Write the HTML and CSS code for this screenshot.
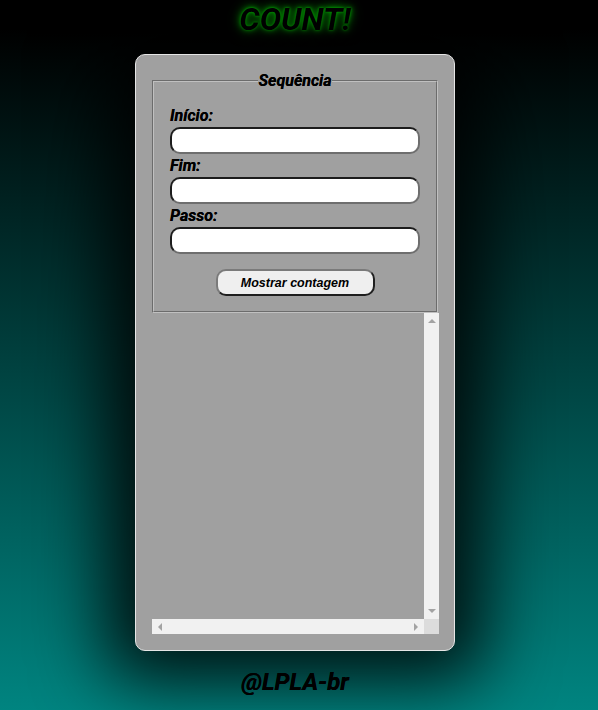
FILE: index.html
```html
<!DOCTYPE html>
<html lang="pt-BR">
<head>
<meta charset="utf-8">
<title>COUNT!</title>
<link rel="stylesheet" href="styles.css">
</head>
<body>
<header class="top">
  <h1 class="title">COUNT!</h1>
</header>
<main class="card">
  <fieldset class="box">
    <legend class="legend">Sequência</legend>
    <label class="lbl" for="inicio">Início:</label>
    <input class="field" type="number" id="inicio">
    <label class="lbl" for="fim">Fim:</label>
    <input class="field" type="number" id="fim">
    <label class="lbl" for="passo">Passo:</label>
    <input class="field" type="number" id="passo">
    <div class="actions">
      <button class="btn" type="button">Mostrar contagem</button>
    </div>
  </fieldset>
  <div class="result">
    <div class="result-body"></div>
    <div class="vbar">
      <span class="arr arr-up"></span>
      <span class="arr arr-down"></span>
    </div>
    <div class="hbar">
      <span class="arr arr-left"></span>
      <span class="arr arr-right"></span>
    </div>
    <div class="corner"></div>
  </div>
</main>
<footer class="foot">@LPLA-br</footer>
</body>
</html>
```
FILE: styles.css
```css
html {
  height: 100%;
}
body {
  margin: 0;
  padding: 0 8px 0 0;
  min-height: 100%;
  box-sizing: border-box;
  background: linear-gradient(to bottom, #000 0%, #000 4%, #008480 100%);
  font-family: Roboto, "Liberation Sans", sans-serif;
  display: flex;
  flex-direction: column;
  align-items: center;
}
.top {
  text-align: center;
}
.title {
  margin: 0;
  font-size: 32px;
  font-weight: 700;
  font-style: italic;
  color: #000;
  line-height: normal;
  text-shadow: 0 0 2px #0e0, 0 0 5px #0c0, 0 0 10px #0a0, 0 0 16px #060;
}
.card {
  margin-top: 16px;
  width: 320px;
  box-sizing: border-box;
  background: #a0a0a0;
  border: 1px solid #e6e6e6;
  border-radius: 10px;
  padding: 16px;
  box-shadow: 0 0 70px 30px rgba(0, 0, 0, 0.85);
}
.box {
  margin: 0;
  padding: 16px 16px 15px;
  border: 2px groove #c0c0c0;
  display: flex;
  flex-direction: column;
  min-width: 0;
}
.legend {
  margin: 0 auto;
  padding: 0 1px;
  font-size: 16px;
  font-weight: 700;
  font-style: italic;
  color: #000;
  text-shadow: 0 0 0.5px #000;
}
.lbl {
  font-size: 16px;
  font-weight: 700;
  font-style: italic;
  color: #000;
  line-height: 19px;
  text-shadow: 0 0 0.5px #000;
}
.field {
  display: block;
  box-sizing: border-box;
  width: 100%;
  height: 27px;
  margin: 2px 0 2px;
  border: 2px solid;
  border-color: #1c1c1c #6e6e6e #6e6e6e #1c1c1c;
  border-radius: 10px;
  background: #fff;
  padding: 0 8px;
  font-family: Roboto, sans-serif;
  font-size: 14px;
}
.actions {
  display: flex;
  justify-content: center;
  margin-top: 13px;
}
.btn {
  width: 159px;
  height: 27px;
  box-sizing: border-box;
  background: #efefef;
  border: 2px solid;
  border-color: #7a7a7a #1f1f1f #1f1f1f #7a7a7a;
  border-radius: 10px;
  font-family: "Liberation Sans", Arial, sans-serif;
  font-size: 12.5px;
  font-weight: 700;
  font-style: italic;
  color: #000;
  padding: 0;
}
.result {
  height: 321px;
  margin-right: -1px;
  display: grid;
  grid-template-columns: 1fr 15px;
  grid-template-rows: 1fr 15px;
}
.vbar {
  background: #f1f1f1;
  display: flex;
  flex-direction: column;
  justify-content: space-between;
  align-items: center;
  padding: 6px 0;
}
.hbar {
  background: #f1f1f1;
  display: flex;
  justify-content: space-between;
  align-items: center;
  padding: 0 6px;
}
.corner {
  background: #dcdcdc;
}
.arr {
  width: 0;
  height: 0;
  border-style: solid;
  border-color: transparent;
}
.arr-up {
  border-width: 0 4px 4px;
  border-bottom-color: #a3a3a3;
}
.arr-down {
  border-width: 4px 4px 0;
  border-top-color: #a3a3a3;
}
.arr-left {
  border-width: 4px 4px 4px 0;
  border-right-color: #a3a3a3;
}
.arr-right {
  border-width: 4px 0 4px 4px;
  border-left-color: #a3a3a3;
}
.foot {
  margin-top: 17px;
  font-size: 24px;
  font-weight: 700;
  font-style: italic;
  color: #000;
  line-height: 28px;
  text-shadow: 0 0 0.5px #000;
}
```
